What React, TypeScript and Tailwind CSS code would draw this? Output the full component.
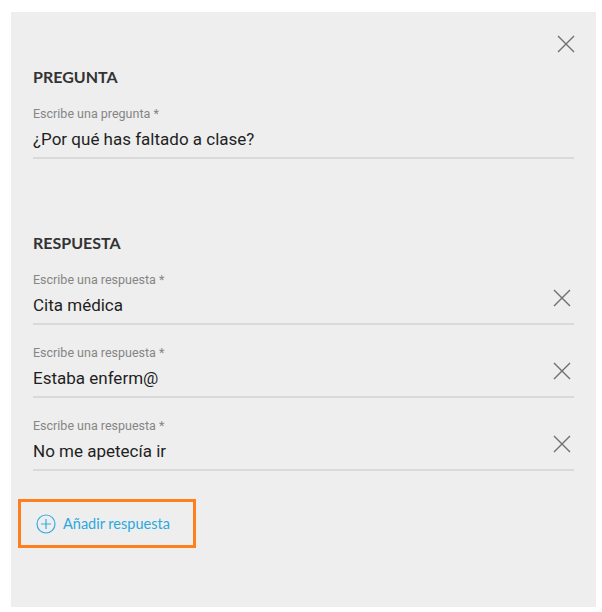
import React from 'react';

function CloseIcon({ size = 18, color = '#6f6f6f' }: { size?: number; color?: string }) {
  return (
    <svg width={size} height={size} viewBox="0 0 18 18" fill="none">
      <path d="M1 1 L17 17 M17 1 L1 17" stroke={color} strokeWidth="1.4" />
    </svg>
  );
}

function Field({ label, value, removable }: { label: string; value: string; removable?: boolean }) {
  return (
    <div className="flex items-end border-b-2 border-[#d9d9d9] pb-[6px]">
      <div className="flex flex-1 flex-col">
        <span className="text-[12.5px] leading-4 text-[#858585]" style={{ fontFamily: 'Roboto, sans-serif' }}>
          {label}
        </span>
        <span className="mt-[5px] text-[17px] leading-6 text-[#1f1f1f]" style={{ fontFamily: 'Roboto, sans-serif' }}>
          {value}
        </span>
      </div>
      {removable && (
        <div className="mb-[10px] mr-[3px]">
          <CloseIcon />
        </div>
      )}
    </div>
  );
}

export default function App() {
  const answers = ['Cita médica', 'Estaba enferm@', 'No me apetecía ir'];

  return (
    <div className="h-[612px] w-[602px] bg-white pl-[11px] pt-[12px]">
      <div className="flex h-[595px] w-[585px] flex-col bg-[#eeeeee] px-[22px] pt-[23px]">
        {/* close */}
        <div className="flex justify-end">
          <div className="-mr-[1px]">
            <CloseIcon />
          </div>
        </div>

        {/* Pregunta */}
        <h2 className="mt-[14px] text-[16px] font-bold leading-5 text-[#333333]" style={{ fontFamily: 'Lato, sans-serif' }}>
          PREGUNTA
        </h2>
        <div className="mt-[19px]">
          <Field label="Escribe una pregunta *" value="¿Por qué has faltado a clase?" />
        </div>

        {/* Respuesta */}
        <h2 className="mt-[74px] text-[16px] font-bold leading-5 text-[#333333]" style={{ fontFamily: 'Lato, sans-serif' }}>
          RESPUESTA
        </h2>
        <div className="mt-[19px] flex flex-col gap-[20px]">
          {answers.map((a) => (
            <Field key={a} label="Escribe una respuesta *" value={a} removable />
          ))}
        </div>

        {/* Añadir */}
        <div className="-ml-[15px] mt-[28px] flex h-[49px] w-[178px] items-center gap-[7px] border-[3px] border-[#ff7f1e] pl-[15px]">
          <svg width="20" height="20" viewBox="0 0 20 20" fill="none">
            <circle cx="10" cy="10" r="9" stroke="#35ade2" strokeWidth="1.2" />
            <path d="M10 5 V15 M5 10 H15" stroke="#35ade2" strokeWidth="1.2" />
          </svg>
          <span className="text-[14.5px] text-[#2aa8de]" style={{ fontFamily: 'Lato, sans-serif' }}>
            Añadir respuesta
          </span>
        </div>
      </div>
    </div>
  );
}
